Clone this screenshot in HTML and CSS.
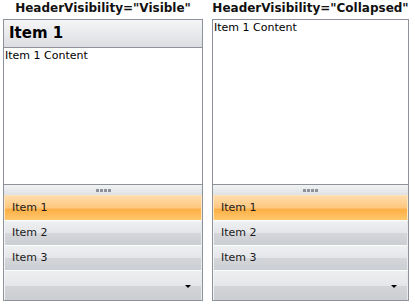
FILE: index.html
```html
<!DOCTYPE html>
<html>
<head>
<meta charset="utf-8">
<link rel="stylesheet" href="styles.css">
</head>
<body>
<div class="page">
  <div class="col col-left">
    <div class="title">HeaderVisibility="Visible"</div>
    <div class="panel">
      <div class="header">Item 1</div>
      <div class="content">Item 1 Content</div>
      <div class="splitter"><span></span><span></span><span></span><span></span></div>
      <div class="item selected">Item 1</div>
      <div class="item">Item 2</div>
      <div class="item">Item 3</div>
      <div class="dropdown"><span class="arrow"></span></div>
    </div>
  </div>
  <div class="col col-right">
    <div class="title">HeaderVisibility="Collapsed"</div>
    <div class="panel">
      <div class="content">Item 1 Content</div>
      <div class="splitter"><span></span><span></span><span></span><span></span></div>
      <div class="item selected">Item 1</div>
      <div class="item">Item 2</div>
      <div class="item">Item 3</div>
      <div class="dropdown"><span class="arrow"></span></div>
    </div>
  </div>
</div>
</body>
</html>
```
FILE: styles.css
```css
html, body {
  margin: 0;
  padding: 0;
  background: #ffffff;
}
body {
  font-family: "DejaVu Sans", Verdana, sans-serif;
  color: #000;
}
.page {
  display: flex;
  padding-left: 3px;
  gap: 9px;
}
.col {
  display: flex;
  flex-direction: column;
}
.col-left { width: 200px; }
.col-right { width: 197px; }
.title {
  height: 19px;
  line-height: 17px;
  font-weight: bold;
  font-size: 12px;
  text-align: center;
  color: #111;
}
.panel {
  height: 280px;
  border: 1px solid #8e939b;
  display: flex;
  flex-direction: column;
}
.header {
  height: 27px;
  line-height: 26px;
  border-bottom: 1px solid #8e939b;
  background: linear-gradient(#f5f5f7, #e9eaed 50%, #dcdde1);
  font-weight: bold;
  font-size: 15px;
  padding-left: 5px;
}
.content {
  flex: 1;
  background: #fff;
  font-size: 11px;
  line-height: 14px;
  padding-left: 1px;
  padding-top: 1px;
}
.splitter {
  height: 10px;
  border-top: 1px solid #8e939b;
  background: linear-gradient(#f1f2f4, #dfe1e4);
  display: flex;
  justify-content: center;
  align-items: center;
  gap: 1px;
}
.splitter span {
  width: 3px;
  height: 3px;
  background: #8d929b;
}
.item {
  height: 24px;
  line-height: 23px;
  border-top: 1px solid #fcfcfd;
  border-left: 1px solid #f3f4f5;
  border-right: 1px solid #e9eaec;
  font-size: 11px;
  padding-left: 7px;
  background: linear-gradient(#eff0f2, #e3e5e8 50%, #d4d6da 52%, #cbced2);
  color: #1a1a1a;
}
.item.selected {
  background: linear-gradient(#ffdcab, #ffc77e 50%, #fdae45 55%, #ffc86c);
  border-color: #ffe7c4;
  border-top-color: #ffe2b8;
}
.dropdown {
  height: 29px;
  border-top: 1px solid #fcfcfd;
  border-left: 1px solid #f3f4f5;
  border-right: 1px solid #e9eaec;
  background: linear-gradient(#eeeff1, #e4e6e9 50%, #d3d5d9 52%, #cbced2);
  display: flex;
  justify-content: flex-end;
  align-items: center;
  padding-right: 10px;
}
.arrow {
  width: 0;
  height: 0;
  border-left: 3px solid transparent;
  border-right: 3px solid transparent;
  border-top: 3px solid #000;
  margin-top: 2px;
}
```
